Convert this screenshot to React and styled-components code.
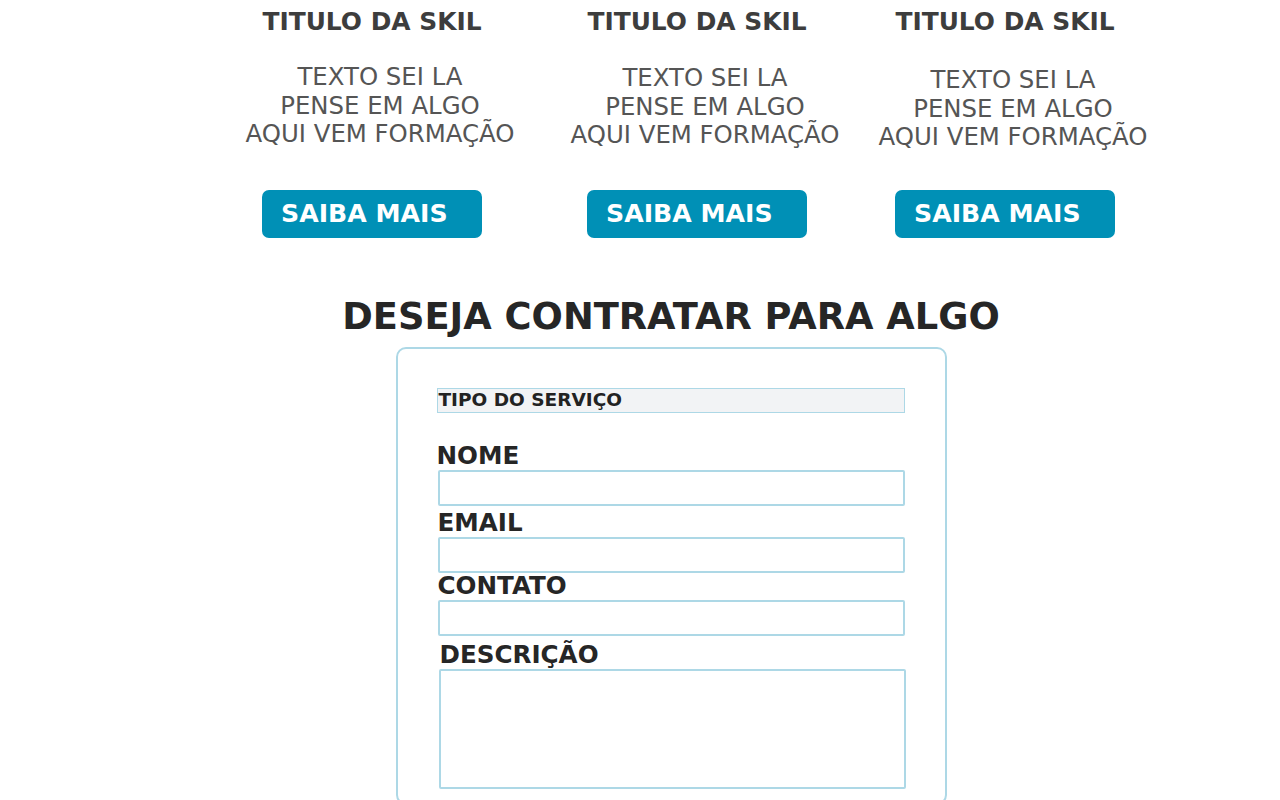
import React from "react";
import styled, { createGlobalStyle } from "styled-components";

const GlobalStyle = createGlobalStyle`
  body {
    margin: 0;
    background: #fff;
    font-family: "DejaVu Sans", Verdana, sans-serif;
  }
`;

const Page = styled.div`
  padding-top: 8px;
`;

const Skills = styled.section`
  display: flex;
  padding-left: 222px;
`;

const Skill = styled.div`
  width: 300px;
  margin-left: ${(p) => p.$offset || 0}px;
  display: flex;
  flex-direction: column;
  align-items: center;
`;

const SkillTitle = styled.h3`
  margin: 0;
  font-size: 24.9px;
  line-height: 28px;
  font-weight: bold;
  color: #3d3d3d;
`;

const SkillText = styled.p`
  margin: ${(p) => 27 + (p.$drop || 0)}px 0 0;
  padding-left: 16px;
  font-size: 24.4px;
  line-height: 28.5px;
  color: #555;
  text-align: center;
`;

const MoreButton = styled.button`
  margin-top: ${(p) => 41 - (p.$drop || 0)}px;
  width: 220px;
  height: 48px;
  padding: 0 0 0 19px;
  border: none;
  border-radius: 7px;
  background: #0090b6;
  color: #fff;
  font-family: inherit;
  font-size: 25.2px;
  font-weight: bold;
  text-align: left;
  cursor: pointer;
`;

const Contact = styled.section`
  margin-left: 62px;
  margin-top: 58px;
  display: flex;
  flex-direction: column;
  align-items: center;
`;

const Heading = styled.h1`
  margin: 0;
  font-size: 36.8px;
  line-height: 42px;
  font-weight: bold;
  color: #262626;
`;

const FormBox = styled.form`
  margin-top: 9px;
  width: 551px;
  box-sizing: border-box;
  border: 2px solid #add8e6;
  border-radius: 10px;
  padding: 39px 0 14px 39px;
`;

const ServiceSelect = styled.div`
  width: 468px;
  height: 25px;
  box-sizing: border-box;
  border: 1px solid #add8e6;
  background: #f2f3f5;
  padding-left: 1px;
  font-size: 18.5px;
  line-height: 21px;
  font-weight: bold;
  color: #222;
`;

const Label = styled.label`
  display: block;
  margin-top: ${(p) => p.$top}px;
  margin-left: ${(p) => p.$shift || 0}px;
  font-size: 24.6px;
  line-height: 24px;
  font-weight: bold;
  color: #262626;
`;

const Input = styled.input`
  display: block;
  margin: 2px 0 0 1px;
  width: 467px;
  height: 36px;
  box-sizing: border-box;
  border: 2px solid #add8e6;
  border-radius: 2px;
  outline: none;
`;

const TextArea = styled.textarea`
  display: block;
  margin: 2px 0 0 2px;
  width: 467px;
  height: 120px;
  box-sizing: border-box;
  border: 2px solid #add8e6;
  border-radius: 2px;
  outline: none;
  resize: none;
`;

const skills = [
  { offset: 0, drop: 0 },
  { offset: 25, drop: 1 },
  { offset: 8, drop: 3 },
];

export default function App() {
  return (
    <Page>
      <GlobalStyle />
      <Skills>
        {skills.map((s, i) => (
          <Skill key={i} $offset={s.offset}>
            <SkillTitle>TITULO DA SKIL</SkillTitle>
            <SkillText $drop={s.drop}>
              TEXTO SEI LA
              <br />
              PENSE EM ALGO
              <br />
              AQUI VEM FORMAÇÃO
            </SkillText>
            <MoreButton $drop={s.drop}>SAIBA MAIS</MoreButton>
          </Skill>
        ))}
      </Skills>

      <Contact>
        <Heading>DESEJA CONTRATAR PARA ALGO</Heading>
        <FormBox onSubmit={(e) => e.preventDefault()}>
          <ServiceSelect>TIPO DO SERVIÇO</ServiceSelect>

          <Label htmlFor="nome" $top={31}>NOME</Label>
          <Input id="nome" name="nome" type="text" />

          <Label htmlFor="email" $top={5} $shift={1}>EMAIL</Label>
          <Input id="email" name="email" type="email" />

          <Label htmlFor="contato" $top={1} $shift={1}>CONTATO</Label>
          <Input id="contato" name="contato" type="text" />

          <Label htmlFor="descricao" $top={7} $shift={3}>DESCRIÇÃO</Label>
          <TextArea id="descricao" name="descricao" />
        </FormBox>
      </Contact>
    </Page>
  );
}
